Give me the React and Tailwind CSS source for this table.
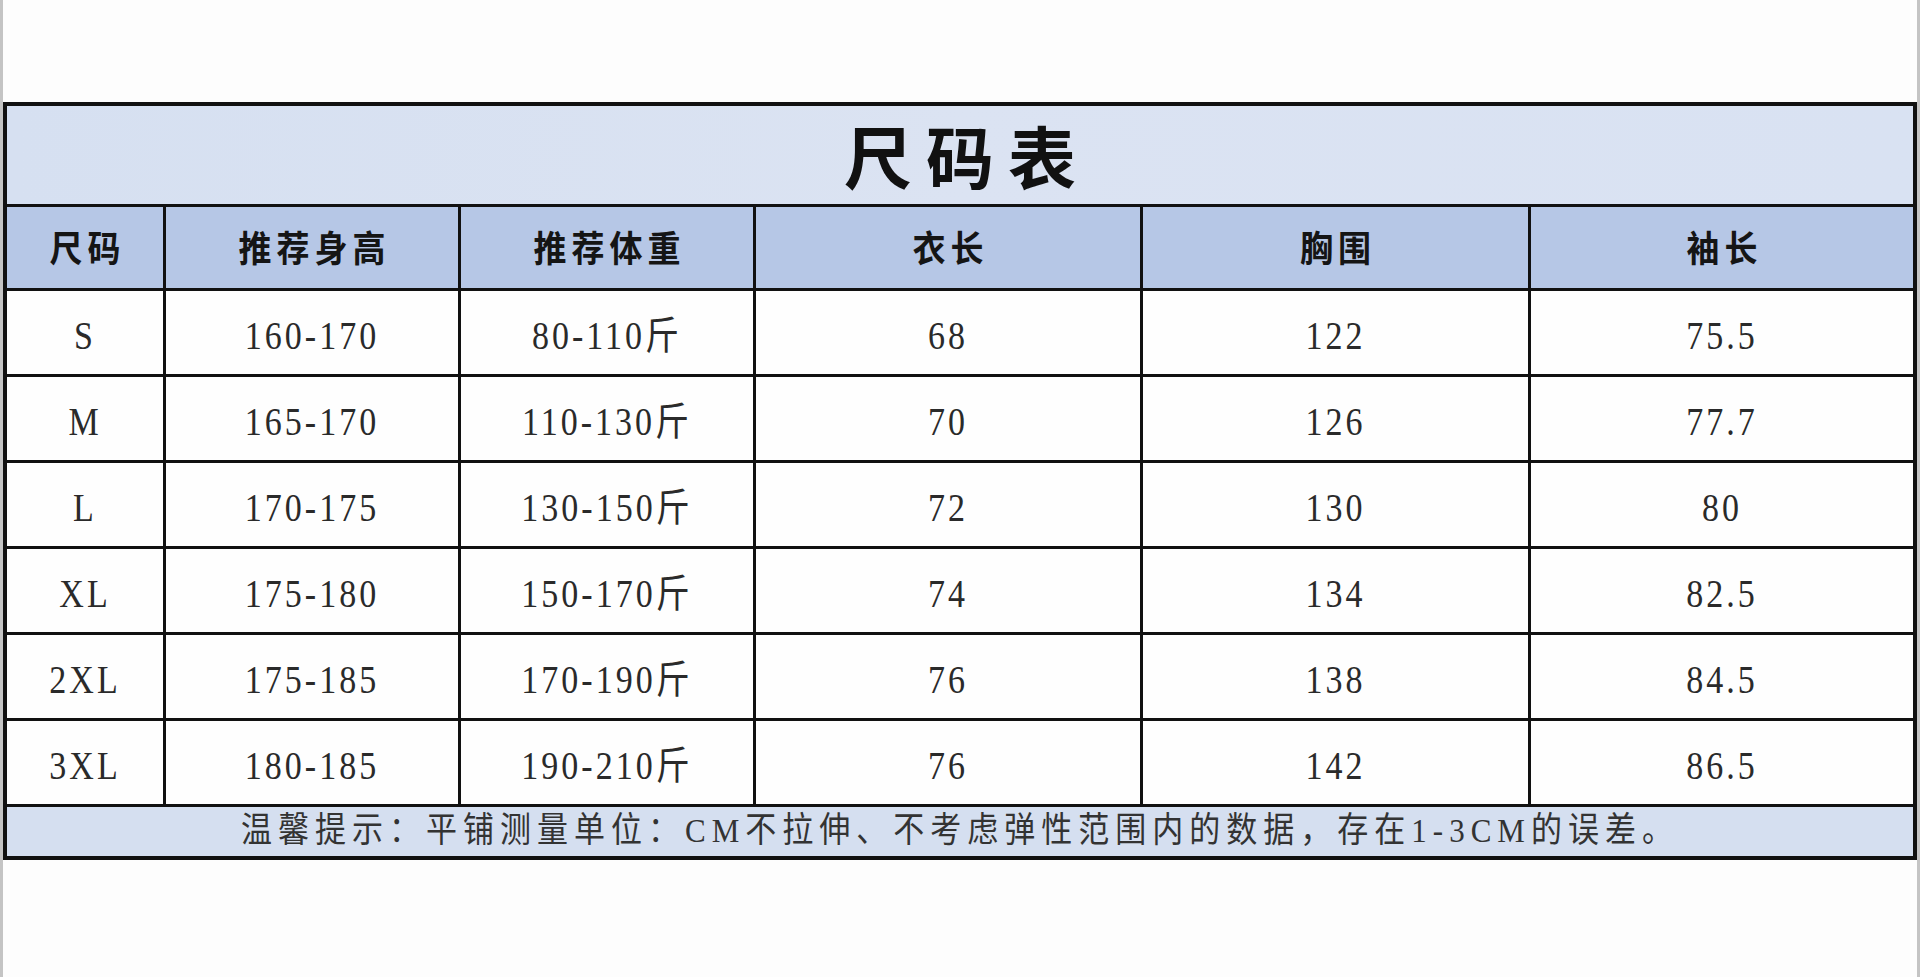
const rows = [
  ["S", "160-170", "80-110斤", "68", "122", "75.5"],
  ["M", "165-170", "110-130斤", "70", "126", "77.7"],
  ["L", "170-175", "130-150斤", "72", "130", "80"],
  ["XL", "175-180", "150-170斤", "74", "134", "82.5"],
  ["2XL", "175-185", "170-190斤", "76", "138", "84.5"],
  ["3XL", "180-185", "190-210斤", "76", "142", "86.5"],
];

const heads = ["尺码", "推荐身高", "推荐体重", "衣长", "胸围", "袖长"];

export default function App() {
  return (
    <main className="min-h-screen bg-[#fdfdfd] border-x-[3px] border-[#c4c4c4] pt-[102px] font-['Liberation_Serif','Noto_Sans_CJK_SC',serif]">
      {/* SIZE TABLE */}
      <div className="grid grid-cols-[156px_292px_292px_384px_385px_1fr] grid-rows-[98px_81px_repeat(6,83px)_49px] gap-[3px] border-4 border-[#111] bg-[#111]">
        <div className="col-span-6 flex items-center justify-center bg-gradient-to-r from-[#d6e0f1] via-[#dbe3f2] to-[#d9e2f2]">
          <h1 className="pl-[14px] text-[68px] font-bold leading-none tracking-[14px] text-[#111] font-['Noto_Sans_CJK_SC',sans-serif]">
            尺码表
          </h1>
        </div>

        {heads.map((h) => (
          <div
            key={h}
            className="flex items-center justify-center bg-[#b6c7e6] text-[#151515] font-['Noto_Sans_CJK_SC',sans-serif]"
          >
            <span className="inline-block scale-y-[1.1] pl-[5px] text-[33px] font-semibold tracking-[5px]">{h}</span>
          </div>
        ))}

        {rows.map((r) =>
          r.map((cell, i) => (
            <div
              key={r[0] + i}
              className="flex items-center justify-center bg-[#fefefe] pt-[6px] text-[#2a2a2a]"
            >
              <span className="inline-block scale-y-[1.15] text-[34px] tracking-[3px]">{cell}</span>
            </div>
          ))
        )}

        <div className="col-span-6 flex items-center justify-center bg-[#d5dff0] text-[#333]">
          <span className="inline-block scale-y-[1.12] text-[31px] tracking-[6px]">
            温馨提示：平铺测量单位：CM不拉伸、不考虑弹性范围内的数据，存在1-3CM的误差。
          </span>
        </div>
      </div>
    </main>
  );
}
